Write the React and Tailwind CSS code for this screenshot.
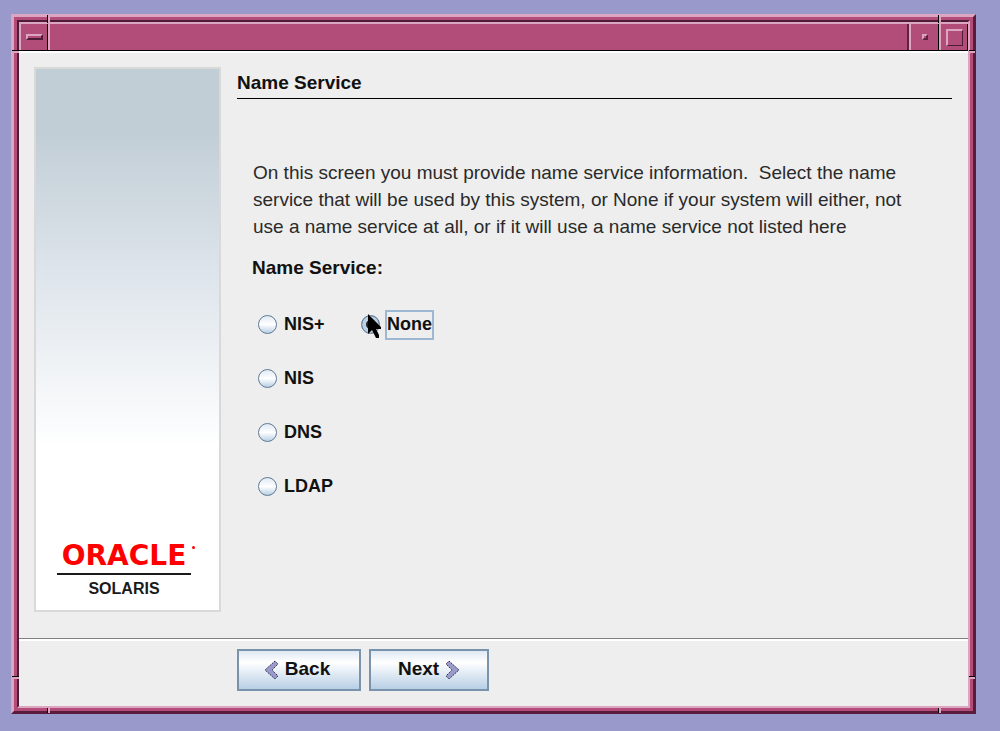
import React, { useState } from "react";

const RADIO =
  "mb-[2px] size-[19px] shrink-0 appearance-none rounded-full border border-[#5f7a93] bg-linear-to-b from-[#dfe9f3] via-white to-[#b8cfe5] checked:from-[#a3b8cc] checked:via-[#dfe9f3] checked:to-[#b8cfe5] checked:shadow-[inset_0_0_0_4px_#b8cfe5,inset_0_0_0_9px_#222]";

function Option({ value, selected, onSelect }) {
  const id = "ns-" + value;
  return (
    <div className="flex h-7 items-center gap-[5px]">
      <input
        id={id}
        type="radio"
        name="name-service"
        checked={selected === value}
        onChange={() => onSelect(value)}
        className={RADIO}
      />
      <label
        htmlFor={id}
        className={
          selected === value
            ? "border-2 border-[#9db8d2] pb-px text-lg leading-[25px] font-bold"
            : "border-2 border-transparent pb-px text-lg leading-[25px] font-bold"
        }
      >
        {value}
      </label>
    </div>
  );
}

function Pointer() {
  return (
    <svg
      className="pointer-events-none absolute top-[3px] left-[7px]"
      width="14"
      height="26"
      viewBox="0 0 14 26"
      aria-hidden="true"
    >
      <path d="M0 0V20L4 16L8 24H11V21L8 15H13V13Z" fill="#000" />
    </svg>
  );
}

function Chevron({ next }) {
  return (
    <svg className="mt-[2px]" width="15" height="20" viewBox="0 0 15 20" aria-hidden="true">
      <path
        d={next ? "M4 1L14 10L4 19L1 16L7 10L1 4Z" : "M11 1L1 10L11 19L14 16L8 10L14 4Z"}
        fill="#9999cc"
        stroke="#2b2b45"
        strokeDasharray="1.5 1"
      />
    </svg>
  );
}

function TitleBar() {
  return (
    <header className="flex h-[29px] border-t-2 border-b border-t-[#dda6c0] border-b-black bg-[#b24d7a]">
      <button aria-label="Window menu" className="flex w-[29px] items-center justify-center border-r border-l-2 border-l-[#dda6c0] border-r-black">
        <span className="h-[6px] w-[17px] border-2 border-t-[#dda6c0] border-r-[#4f1c38] border-b-[#4f1c38] border-l-[#dda6c0]" />
      </button>
      <div className="flex-1 border-r-2 border-l-2 border-l-[#dda6c0] border-r-[#632041]" />
      <button aria-label="Minimize" className="flex w-[30px] items-center justify-center border-r border-l-2 border-l-[#dda6c0] border-r-black">
        <span className="size-[6px] border-2 border-t-[#dda6c0] border-r-[#632041] border-b-[#632041] border-l-[#dda6c0]" />
      </button>
      <button aria-label="Maximize" className="flex w-[29px] items-center justify-center border-r border-l-2 border-l-[#dda6c0] border-r-black">
        <span className="size-[17px] border-t-2 border-r border-b border-l-2 border-t-[#dda6c0] border-r-[#4f1c38] border-b-[#4f1c38] border-l-[#dda6c0]" />
      </button>
    </header>
  );
}

function FrameNotches() {
  const v = "absolute w-[3px] border-l border-l-black bg-[#dda6c0]";
  const h = "absolute h-[3px] border-t border-t-black bg-[#dda6c0]";
  return (
    <div aria-hidden="true">
      <span className={v + " -top-[2px] left-[33px] h-[8px]"} />
      <span className={v + " -top-[2px] right-[32px] h-[8px]"} />
      <span className={v + " -bottom-[2px] left-[33px] h-[5px]"} />
      <span className={v + " right-[32px] -bottom-[2px] h-[5px]"} />
      <span className={h + " top-[33px] -left-[2px] w-[7px]"} />
      <span className={h + " top-[33px] -right-[2px] w-[6px]"} />
      <span className={h + " bottom-[32px] -left-[2px] w-[7px]"} />
      <span className={h + " -right-[2px] bottom-[32px] w-[6px]"} />
    </div>
  );
}

function Sidebar() {
  return (
    <aside className="flex w-[187px] shrink-0 flex-col justify-end border-2 border-[#d9d9d9] bg-linear-to-b from-[#c2ced6] from-12% via-[#dce3ea] via-36% to-white to-70% pr-[28px] pb-[11px] pl-[21px]">
      <div className="relative flex justify-center border-b-2 border-[#1a1a1a] font-['DejaVu_Sans',sans-serif] text-[28px] leading-[34px] font-bold text-[#ff0000]">
        ORACLE
        <span className="absolute top-[7px] -right-[4px] size-[3px] rounded-full bg-[#ff0000]" />
      </div>
      <div className="pt-[4px] text-center text-base leading-5 font-bold text-[#1a1a1a]">SOLARIS</div>
    </aside>
  );
}

const BUTTON =
  "flex h-[42px] items-center justify-center gap-[6px] border-2 border-[#7a93ad] bg-linear-to-b from-[#dfe9f3] via-white via-30% to-[#b8cfe5] pb-[2px] text-[19px] font-bold";

export default function App() {
  const [selected, setSelected] = useState("None");
  const option = (value) => <Option value={value} selected={selected} onSelect={setSelected} />;
  return (
    <div className="flex min-h-screen flex-col bg-[#9999cc] pt-[14px] pr-6 pb-[17px] pl-[11px] font-['Liberation_Sans',sans-serif] text-[#111]">
      <div className="relative flex flex-1 flex-col border-3 border-t-[#dda6c0] border-r-[#5a1c3c] border-b-[#5a1c3c] border-l-[#dda6c0]">
        <div className="flex flex-1 flex-col border-3 border-[#b24d7a]">
          <div className="flex flex-1 flex-col border-2 border-t-[#4f1c38] border-r-[#dda6c0] border-b-[#dda6c0] border-l-[#4f1c38]">
            <TitleBar />
            <div className="flex flex-1 flex-col border-t-2 border-t-white bg-[#eeeeee]">
              <div className="flex flex-1 pt-[14px] pr-4 pb-[26px] pl-[15px]">
                <Sidebar />
                <main className="flex-1 pl-4">
                  <h1 className="border-b border-black pt-[3px] pb-[2px] text-[19px] leading-[26px] font-bold">Name Service</h1>
                  <p className="mt-[60px] pr-8 pl-4 text-[19px] leading-[27px] whitespace-pre-wrap text-[#2a2a2a]">
                    {"On this screen you must provide name service information.  Select the name service that will be used by this system, or None if your system will either, not use a name service at all, or if it will use a name service not listed here"}
                  </p>
                  <fieldset className="pl-[15px]">
                    <legend className="pt-[14px] text-[19px] leading-[27px] font-bold">Name Service:</legend>
                    <div className="flex items-start gap-[26px] pt-[30px] pl-[6px]">
                      <div className="flex flex-col gap-[26px]">
                        {option("NIS+")}
                        {option("NIS")}
                        {option("DNS")}
                        {option("LDAP")}
                      </div>
                      <div className="relative">
                        {option("None")}
                        <Pointer />
                      </div>
                    </div>
                  </fieldset>
                </main>
              </div>
              <footer className="flex gap-2 border-t border-[#808080] pt-[10px] pb-[15px] pl-[218px] shadow-[inset_0_2px_0_#fff]">
                <button className={BUTTON + " w-[124px] pr-1"}>
                  <Chevron />
                  Back
                </button>
                <button className={BUTTON + " w-[120px]"}>
                  Next
                  <Chevron next />
                </button>
              </footer>
            </div>
          </div>
        </div>
        <FrameNotches />
      </div>
    </div>
  );
}
